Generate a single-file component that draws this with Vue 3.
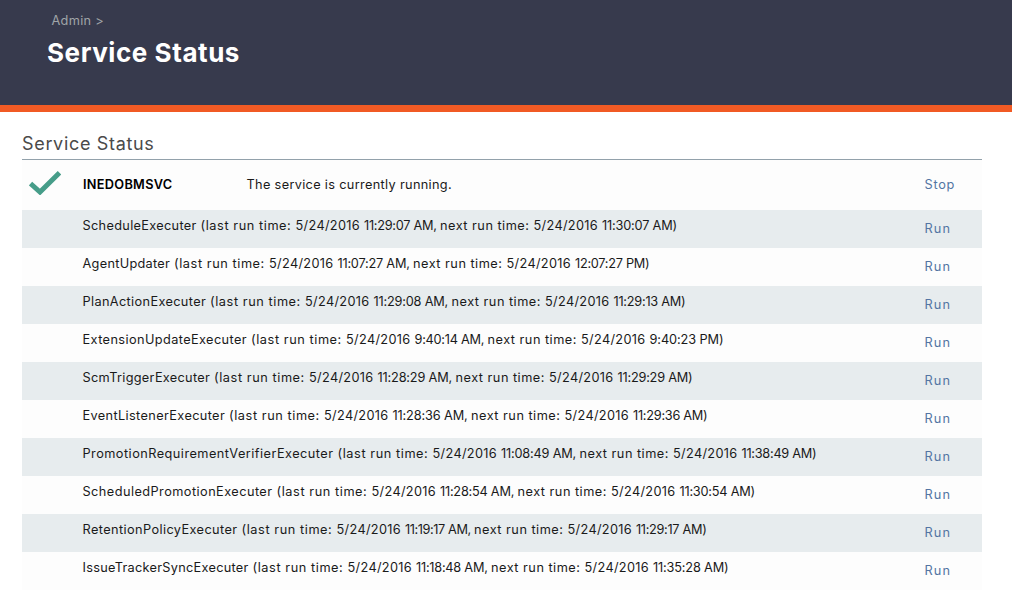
<script setup>
// Tracks text so that it advances by exactly the given number of pixels.
const vFit = {
  mounted(el, { value }) {
    el.style.width = 'auto'
    const natural = el.getBoundingClientRect().width
    el.style.letterSpacing = (value - natural) / el.textContent.length + 'px'
    el.style.width = value + 'px'
  }
}

const day = '5/24/2016 '
const row = (name, last, next, nameWidth, lastWidth, nextWidth) => [
  [name + ' ', nameWidth],
  ['(last run time: ', 95],
  [day, 68.5],
  [last + ', ', lastWidth],
  ['next run time: ', 93.5],
  [day, 68.5],
  [next + ')', nextWidth]
]

const executers = [
  row('ScheduleExecuter', '11:29:07 AM', '11:30:07 AM', 118, 76, 75),
  row('AgentUpdater', '11:07:27 AM', '12:07:27 PM', 91.5, 75.5, 74.5),
  row('PlanActionExecuter', '11:29:08 AM', '11:29:13 AM', 127.5, 78, 72),
  row('ExtensionUpdateExecuter', '9:40:14 AM', '9:40:23 PM', 168.5, 73, 74),
  row('ScmTriggerExecuter', '11:28:29 AM', '11:29:29 AM', 131.5, 78, 75),
  row('EventListenerExecuter', '11:28:36 AM', '11:29:36 AM', 146.5, 78.5, 74.5),
  row('PromotionRequirementVerifierExecuter', '11:08:49 AM', '11:38:49 AM', 255, 78.5, 75),
  row('ScheduledPromotionExecuter', '11:28:54 AM', '11:30:54 AM', 194, 77.5, 75.5),
  row('RetentionPolicyExecuter', '11:19:17 AM', '11:29:17 AM', 159, 69, 70.5),
  row('IssueTrackerSyncExecuter', '11:18:48 AM', '11:35:28 AM', 170, 75, 75.5)
]
</script>

<template>
  <div class="page">
    <header class="banner">
      <a class="crumb"><span v-fit="52.5">Admin &gt;</span></a>
      <h1><span v-fit="193">Service Status</span></h1>
    </header>
    <main>
      <h2><span v-fit="132.5">Service Status</span></h2>
      <div class="service">
        <svg class="check" viewBox="0 0 32 24">
          <path d="M1.5 12.5 L11 21 L30.5 1.8" />
        </svg>
        <strong><span v-fit="89.5">INEDOBMSVC</span></strong>
        <p><span v-fit="205.5">The service is currently running.</span></p>
        <a class="action"><span v-fit="30.5">Stop</span></a>
      </div>
      <div v-for="(parts, i) in executers" :key="i" class="executer">
        <p><span v-for="([text, width], j) in parts" :key="j" v-fit="width">{{ text }}</span></p>
        <a class="action"><span v-fit="26.5">Run</span></a>
      </div>
    </main>
  </div>
</template>

<style>
body {
  margin: 0;
  background: #fff;
}
</style>

<style scoped>
.page {
  height: 605px;
  overflow: hidden;
  font: 12.75px/16px Inter, Roboto, "Liberation Sans", sans-serif;
  color: #1a1a1a;
}
span {
  display: inline-block;
  white-space: pre;
}
.banner {
  box-sizing: border-box;
  height: 112px;
  padding: 13px 0 0 47px;
  background: #373a4d;
  border-bottom: 7px solid #f15a24;
}
.crumb {
  display: block;
  margin-left: 4.5px;
  height: 16px;
  color: #a0a5a8;
}
h1 {
  margin: 8px 0 0;
  font-size: 26px;
  line-height: 32px;
  font-weight: 700;
  color: #fff;
}
main {
  width: 960px;
  margin-left: 22px;
}
h2 {
  box-sizing: border-box;
  height: 48px;
  margin: 0;
  padding-top: 20px;
  font-size: 18px;
  line-height: 24px;
  font-weight: 400;
  color: #4a4a4a;
  border-bottom: 1px solid #92a1ab;
}
.service,
.executer {
  display: flex;
  background: #fdfdfd;
}
p {
  margin: 0;
}
.service {
  height: 50px;
}
.service strong,
.service p,
.service .action {
  padding-top: 17px;
}
.check {
  flex: none;
  width: 32px;
  height: 24px;
  margin: 11px 22px 0 7px;
  fill: none;
  stroke: #469d89;
  stroke-width: 5;
}
strong {
  width: 163.5px;
  font-weight: 600;
  color: #000;
}
.executer {
  height: 38px;
}
.executer:nth-child(odd) {
  background: #e7ecee;
}
.executer p {
  padding: 8px 0 0 60.5px;
}
.action {
  width: 57.5px;
  margin-left: auto;
  color: #5375a3;
}
.executer .action {
  padding-top: 11px;
}
</style>
